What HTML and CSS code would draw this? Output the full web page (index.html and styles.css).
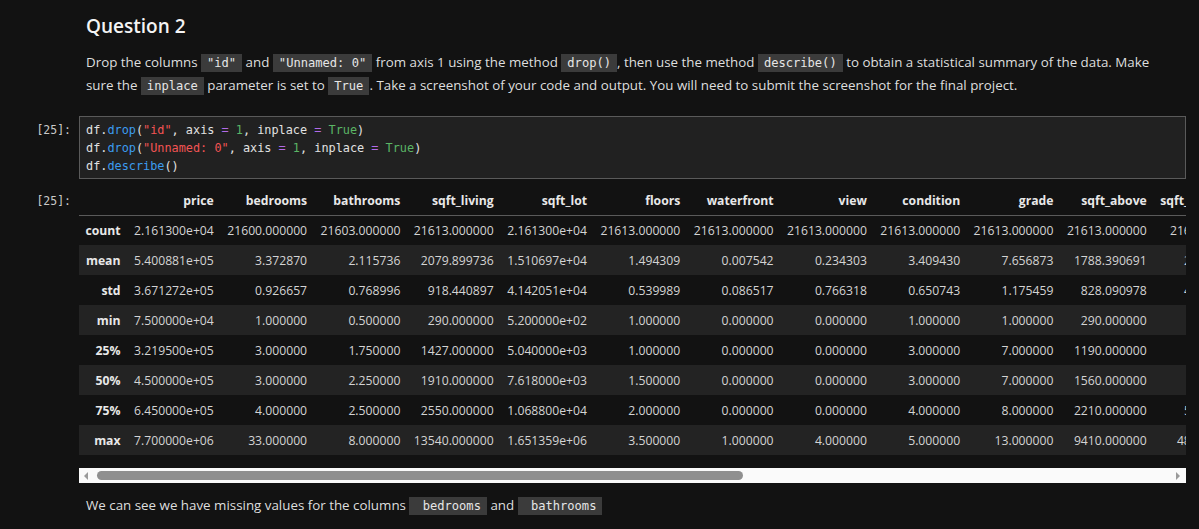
FILE: index.html
```html
<!DOCTYPE html>
<html>
<head>
<meta charset="utf-8">
<title>Question 2</title>
<link rel="stylesheet" href="styles.css">
</head>
<body>
<div class="nb">
  <section class="md">
    <h2>Question 2</h2>
    <p>Drop the columns <code>"id"</code> and <code>"Unnamed: 0"</code> from axis 1 using the method <code>drop()</code>, then use the method <code>describe()</code> to obtain a statistical summary of the data. Make<br>sure the <code>inplace</code> parameter is set to <code>True</code>. Take a screenshot of your code and output. You will need to submit the screenshot for the final project.</p>
  </section>

  <section class="cell incell">
    <div class="prompt">[25]:</div>
    <div class="code">
      <div class="ln">df.<span class="fn">drop</span>(<span class="st">"id"</span>, axis <span class="op">=</span> <span class="nu">1</span>, inplace <span class="op">=</span> <span class="nu">True</span>)</div>
      <div class="ln">df.<span class="fn">drop</span>(<span class="st">"Unnamed: 0"</span>, axis <span class="op">=</span> <span class="nu">1</span>, inplace <span class="op">=</span> <span class="nu">True</span>)</div>
      <div class="ln">df.<span class="fn">describe</span>()</div>
    </div>
  </section>

  <section class="cell outcell">
    <div class="prompt oprompt">[25]:</div>
    <div class="output">
      <div class="scroll">
        <table class="df">
          <colgroup>
            <col class="ix"><col class="c"><col class="c"><col class="c"><col class="c"><col class="c"><col class="c"><col class="c"><col class="c"><col class="c"><col class="c"><col class="c"><col class="wide">
          </colgroup>
          <thead>
            <tr><th></th><th>price</th><th>bedrooms</th><th>bathrooms</th><th>sqft_living</th><th>sqft_lot</th><th>floors</th><th>waterfront</th><th>view</th><th>condition</th><th>grade</th><th>sqft_above</th><th>sqft_basement</th></tr>
          </thead>
          <tbody>
            <tr><th>count</th><td>2.161300e+04</td><td>21600.000000</td><td>21603.000000</td><td>21613.000000</td><td>2.161300e+04</td><td>21613.000000</td><td>21613.000000</td><td>21613.000000</td><td>21613.000000</td><td>21613.000000</td><td>21613.000000</td><td>21613.000000</td></tr>
            <tr><th>mean</th><td>5.400881e+05</td><td>3.372870</td><td>2.115736</td><td>2079.899736</td><td>1.510697e+04</td><td>1.494309</td><td>0.007542</td><td>0.234303</td><td>3.409430</td><td>7.656873</td><td>1788.390691</td><td>291.509045</td></tr>
            <tr><th>std</th><td>3.671272e+05</td><td>0.926657</td><td>0.768996</td><td>918.440897</td><td>4.142051e+04</td><td>0.539989</td><td>0.086517</td><td>0.766318</td><td>0.650743</td><td>1.175459</td><td>828.090978</td><td>442.575043</td></tr>
            <tr><th>min</th><td>7.500000e+04</td><td>1.000000</td><td>0.500000</td><td>290.000000</td><td>5.200000e+02</td><td>1.000000</td><td>0.000000</td><td>0.000000</td><td>1.000000</td><td>1.000000</td><td>290.000000</td><td>0.000000</td></tr>
            <tr><th>25%</th><td>3.219500e+05</td><td>3.000000</td><td>1.750000</td><td>1427.000000</td><td>5.040000e+03</td><td>1.000000</td><td>0.000000</td><td>0.000000</td><td>3.000000</td><td>7.000000</td><td>1190.000000</td><td>0.000000</td></tr>
            <tr><th>50%</th><td>4.500000e+05</td><td>3.000000</td><td>2.250000</td><td>1910.000000</td><td>7.618000e+03</td><td>1.500000</td><td>0.000000</td><td>0.000000</td><td>3.000000</td><td>7.000000</td><td>1560.000000</td><td>0.000000</td></tr>
            <tr><th>75%</th><td>6.450000e+05</td><td>4.000000</td><td>2.500000</td><td>2550.000000</td><td>1.068800e+04</td><td>2.000000</td><td>0.000000</td><td>0.000000</td><td>4.000000</td><td>8.000000</td><td>2210.000000</td><td>560.000000</td></tr>
            <tr><th>max</th><td>7.700000e+06</td><td>33.000000</td><td>8.000000</td><td>13540.000000</td><td>1.651359e+06</td><td>3.500000</td><td>1.000000</td><td>4.000000</td><td>5.000000</td><td>13.000000</td><td>9410.000000</td><td>4820.000000</td></tr>
          </tbody>
        </table>
      </div>
      <div class="hbar">
        <span class="arr arr-l"></span>
        <span class="thumb"></span>
        <span class="arr arr-r"></span>
      </div>
    </div>
  </section>

  <section class="md tail">
    <p>We can see we have missing values for the columns <code> bedrooms</code> and <code> bathrooms</code></p>
  </section>
</div>
</body>
</html>
```

FILE: styles.css
```css
* { box-sizing: border-box; }

html, body {
  margin: 0;
  background: #121212;
}

body {
  width: 1199px;
  height: 529px;
  overflow: hidden;
  font-family: "Open Sans", "Noto Sans", sans-serif;
  color: #dedede;
}

.nb {
  padding: 13px 13px 0 0;
}

.md {
  padding-left: 86px;
}

.md h2 {
  margin: 0;
  font-size: 19px;
  font-weight: 600;
  line-height: 26px;
  color: #f4f4f4;
}

.md p {
  margin: 12px 0 0;
  font-size: 13.35px;
  line-height: 22px;
  white-space: nowrap;
}

code {
  font-family: "DejaVu Sans Mono", "Liberation Mono", monospace;
  font-size: 12.1px;
  background: #3b3b3b;
  color: #e6e6e6;
  padding: 2px 6px;
  white-space: pre;
}

.cell {
  display: grid;
  grid-template-columns: 79px 1fr;
}

.prompt {
  font-family: "DejaVu Sans Mono", "Liberation Mono", monospace;
  font-size: 11.5px;
  color: #c9c9c9;
  text-align: right;
  padding-right: 8px;
  line-height: 18px;
}

.incell {
  margin-top: 19px;
}

.incell .prompt {
  padding-top: 5px;
}

.code {
  background: #212121;
  border: 1px solid #5a5a5a;
  padding: 4px 6px 3px;
  font-family: "DejaVu Sans Mono", "Liberation Mono", monospace;
  font-size: 11.85px;
  line-height: 18px;
  color: #e2e2e2;
}

.ln {
  white-space: pre;
}

.fn { color: #3c9cef; }
.st { color: #f35454; }
.op { color: #b36be8; }
.nu { color: #5bb565; }

.outcell {
  margin-top: 8px;
}

.oprompt {
  line-height: 28px;
}

.output {
  min-width: 0;
}

.scroll {
  width: 1107px;
  overflow: hidden;
}

.df {
  border-collapse: collapse;
  border-spacing: 0;
  table-layout: fixed;
  width: 1177.3px;
  font-size: 12.2px;
}

.df col.ix { width: 48px; }
.df col.c { width: 93.3px; }
.df col.wide { width: 103px; }

.df th,
.df td {
  padding: 0 6.5px;
  text-align: right;
  white-space: nowrap;
  overflow: hidden;
}

.df thead th {
  height: 28px;
  font-weight: 700;
  color: #e8e8e8;
  border-bottom: 1px solid #5a5a5a;
  vertical-align: middle;
}

.df tbody th {
  font-weight: 700;
  color: #e8e8e8;
}

.df tbody td {
  color: #d4d4d4;
}

.df tbody tr {
  height: 30px;
}

.df tbody tr:nth-child(even) {
  background: #232323;
}

.hbar {
  margin-top: 13px;
  height: 15px;
  width: 1107px;
  background: #fafafa;
  display: flex;
  align-items: center;
  padding: 0 6px 0 5px;
}

.arr {
  width: 0;
  height: 0;
  border-top: 4px solid transparent;
  border-bottom: 4px solid transparent;
}

.arr-l {
  border-right: 4px solid #9a9a9a;
}

.arr-r {
  margin-left: auto;
  border-left: 4px solid #9a9a9a;
}

.thumb {
  margin-left: 9px;
  width: 646px;
  height: 9px;
  border-radius: 5px;
  background: #8f8f8f;
}

.tail {
  margin-top: 11px;
}

.tail p {
  margin: 0;
}
```
